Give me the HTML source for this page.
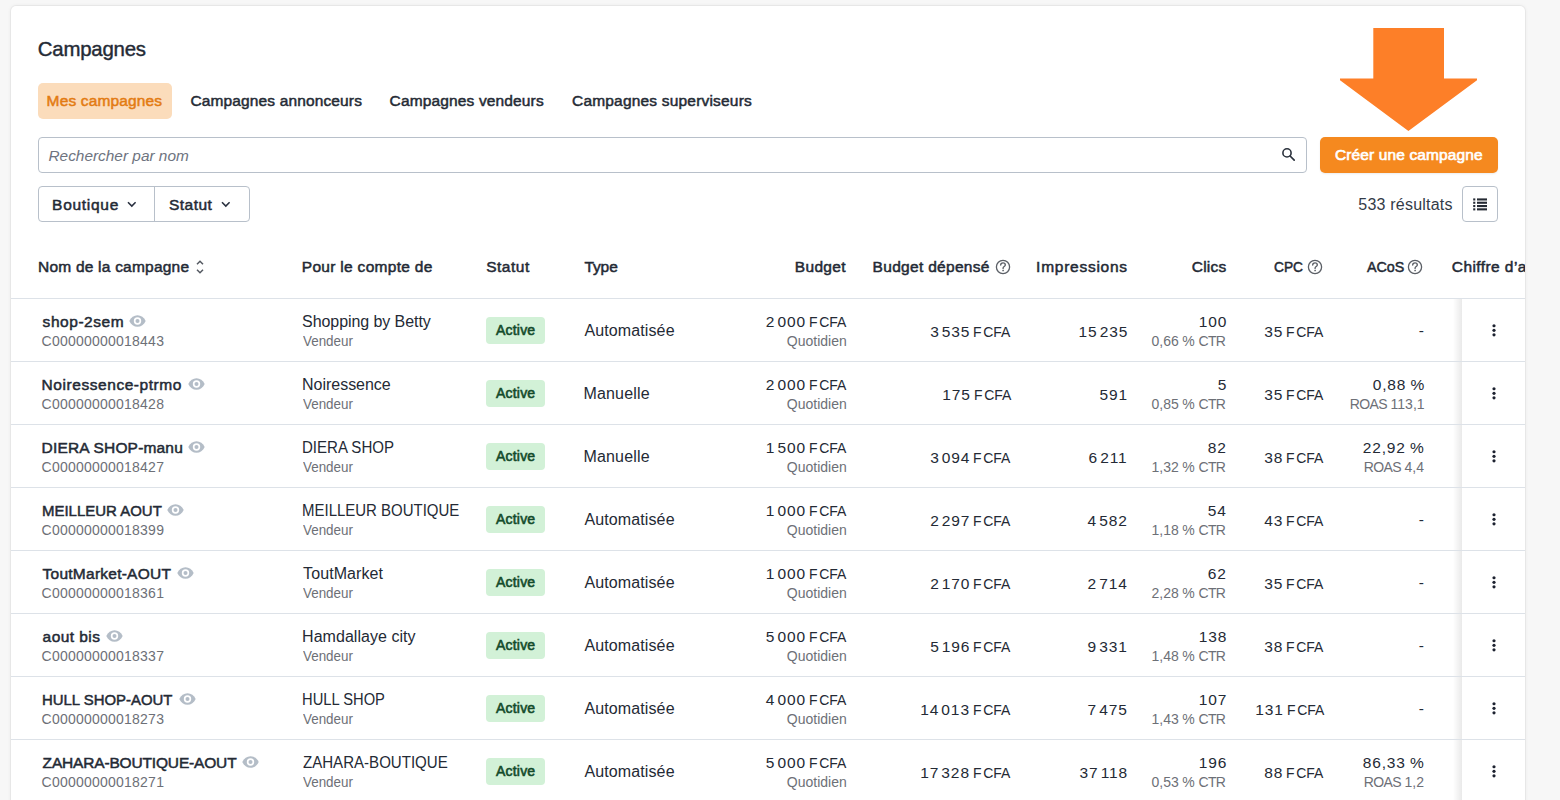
<!DOCTYPE html>
<html><head><meta charset="utf-8"><style>
*{box-sizing:border-box;margin:0;padding:0}
html,body{width:1560px;height:800px;overflow:hidden;background:#f7f7f7;font-family:"Liberation Sans",sans-serif;color:#242a35}
.card{position:absolute;left:11px;top:6px;width:1514px;height:830px;background:#fff;border-radius:5px;box-shadow:0 0 0 1px rgba(0,0,0,0.035),0 0 4px rgba(0,0,0,0.07);overflow:hidden}
.a{position:absolute;white-space:nowrap;line-height:20px}
.sb{-webkit-text-stroke-width:0.5px}
.title{font-size:20.4px;-webkit-text-stroke-width:0.4px}
.tab{font-size:15.5px;color:#252b35}
.tabbg{left:27px;top:77px;width:134px;height:36px;border-radius:5px;background:#fbdcbb}
.on{color:#e37b12}
.search{left:27px;top:131px;width:1269px;height:36px;border:1px solid #b8c0ca;border-radius:4px}
.ph{font-size:15.4px;font-style:italic;color:#6e7480}
.btn{left:1309px;top:131px;width:178px;height:36px;border-radius:5px;background:#f5891f;box-shadow:0 1px 2px rgba(0,0,0,0.08)}
.wt{color:#fff;font-size:15.5px;-webkit-text-stroke-width:0.65px!important}
.filt{left:27px;top:180px;width:212px;height:36px;border:1px solid #b8c0ca;border-radius:4px}
.fdiv{left:115px;top:0;width:1px;height:34px;background:#b8c0ca}
.ftxt{font-size:15.5px}
.res{font-size:16px;color:#333b48}
.lbtn{left:1451px;top:180px;width:36px;height:36px;border:1px solid #b8c0ca;border-radius:4px}
.th{font-size:15.5px}
.chf{letter-spacing:0.42px}
.hline{left:0;width:1514px;height:1px;background:#dde2e8}
.nm{font-size:15.5px}
.sub{font-size:14px;color:#6d7077}
.reg{font-size:16px}
.n16{font-size:15.5px;letter-spacing:0.88px;word-spacing:-3px}
.n14{font-size:14px;color:#6d7077}
.id{}
.sp{letter-spacing:-1.43px;word-spacing:0}
.fcfa{display:inline-block;letter-spacing:0;word-spacing:0;transform:scaleX(0.9);transform-origin:0 50%;margin-right:-4.25px}
.ws14{word-spacing:-2.35px}
.ws0{word-spacing:-1.2px}
.caps{letter-spacing:-0.6px}
.ws1{word-spacing:-0.3px}
.badge{width:59px;height:27px;border-radius:4px;background:#d2f1d7}
.bt{font-size:14px;color:#134b2b;-webkit-text-stroke-width:0.6px!important}
.sticky{left:1451px;width:63px;height:62px;background:#fff}
.shadow{left:1442px;width:9px;height:62px;background:linear-gradient(to right,rgba(0,0,0,0),rgba(0,0,0,0.085))}
.arrow{left:1329px;top:22px}
</style></head><body>
<div class="card">
<div class="a tabbg"></div>
<div class="a search"><svg class="a" style="left:1242px;top:9px" width="16" height="16" viewBox="0 0 16 16"><circle cx="6" cy="5.9" r="4.1" fill="none" stroke="#2a313c" stroke-width="1.6"/><path d="M9.1 9l4.1 4.1" stroke="#2a313c" stroke-width="1.7" stroke-linecap="round"/></svg></div>
<div class="a btn"></div>
<div class="a filt"><div class="a fdiv"></div><svg class="a" style="left:88px;top:14px" width="10" height="7" viewBox="0 0 10 7"><path d="M1 1.2l3.8 3.8 3.8-3.8" fill="none" stroke="#2a3140" stroke-width="1.6"/></svg><svg class="a" style="left:182px;top:14px" width="10" height="7" viewBox="0 0 10 7"><path d="M1 1.2l3.8 3.8 3.8-3.8" fill="none" stroke="#2a3140" stroke-width="1.6"/></svg></div>
<div class="a lbtn"><svg class="a" style="left:10.3px;top:11px" width="14" height="13" viewBox="0 0 14 13"><rect x="0.2" y="0.4" width="2.1" height="2.1" fill="#252a33"/><rect x="4" y="0.4" width="10" height="2.1" fill="#252a33"/><rect x="0.2" y="3.7" width="2.1" height="2.1" fill="#252a33"/><rect x="4" y="3.7" width="10" height="2.1" fill="#252a33"/><rect x="0.2" y="7.0" width="2.1" height="2.1" fill="#252a33"/><rect x="4" y="7.0" width="10" height="2.1" fill="#252a33"/><rect x="0.2" y="10.3" width="2.1" height="2.1" fill="#252a33"/><rect x="4" y="10.3" width="10" height="2.1" fill="#252a33"/></svg></div>
<svg class="a arrow" width="140" height="105" viewBox="0 0 140 105"><path d="M33.3 0H104V50.5H137V52.3L68.4 103L0 52.3V50.5H33.3Z" fill="#fd7f28"/></svg>
<svg class="a" style="left:185px;top:254px" width="8" height="14" viewBox="0 0 8 14"><path d="M1 4.3l3-3 3 3M1 9.7l3 3 3-3" fill="none" stroke="#555a62" stroke-width="1.5"/></svg>
<svg class="a" style="left:983.5px;top:253px" width="16" height="16" viewBox="0 0 16 16"><circle cx="8" cy="8" r="6.6" fill="none" stroke="#5b5f66" stroke-width="1.3"/><path d="M5.7 6.1C5.7 4.7 6.7 3.9 8 3.9C9.4 3.9 10.3 4.8 10.3 5.9C10.3 7.4 8.1 7.6 8.1 9.1V9.5" fill="none" stroke="#5b5f66" stroke-width="1.35" stroke-linecap="round"/><circle cx="8.1" cy="11.5" r=".85" fill="#5b5f66"/></svg>
<svg class="a" style="left:1296px;top:253px" width="16" height="16" viewBox="0 0 16 16"><circle cx="8" cy="8" r="6.6" fill="none" stroke="#5b5f66" stroke-width="1.3"/><path d="M5.7 6.1C5.7 4.7 6.7 3.9 8 3.9C9.4 3.9 10.3 4.8 10.3 5.9C10.3 7.4 8.1 7.6 8.1 9.1V9.5" fill="none" stroke="#5b5f66" stroke-width="1.35" stroke-linecap="round"/><circle cx="8.1" cy="11.5" r=".85" fill="#5b5f66"/></svg>
<svg class="a" style="left:1396px;top:253px" width="16" height="16" viewBox="0 0 16 16"><circle cx="8" cy="8" r="6.6" fill="none" stroke="#5b5f66" stroke-width="1.3"/><path d="M5.7 6.1C5.7 4.7 6.7 3.9 8 3.9C9.4 3.9 10.3 4.8 10.3 5.9C10.3 7.4 8.1 7.6 8.1 9.1V9.5" fill="none" stroke="#5b5f66" stroke-width="1.35" stroke-linecap="round"/><circle cx="8.1" cy="11.5" r=".85" fill="#5b5f66"/></svg>
<div class="a hline" style="top:292px"></div>
<div class="a shadow" style="top:293px"></div><div class="a sticky" style="top:293px"></div>
<svg class="a" style="left:118.0px;top:308.5px" width="17" height="12" viewBox="0 0 17 12"><path d="M0.3 6C2 2.3 5 0.2 8.5 0.2S15 2.3 16.7 6C15 9.7 12 11.8 8.5 11.8S2 9.7 0.3 6Z" fill="#b4bdc7"/><circle cx="8.5" cy="6" r="3.7" fill="#fff"/><circle cx="8.5" cy="6" r="2" fill="#b4bdc7"/></svg>
<div class="a badge" style="left:475px;top:311px"></div>
<svg class="a" style="left:1481px;top:317.7px" width="4" height="13" viewBox="0 0 4 13"><circle cx="2" cy="1.75" r="1.6" fill="#1d2230"/><circle cx="2" cy="6.3" r="1.6" fill="#1d2230"/><circle cx="2" cy="10.85" r="1.6" fill="#1d2230"/></svg>
<div class="a hline" style="top:355px"></div>
<div class="a shadow" style="top:356px"></div><div class="a sticky" style="top:356px"></div>
<svg class="a" style="left:176.5px;top:371.5px" width="17" height="12" viewBox="0 0 17 12"><path d="M0.3 6C2 2.3 5 0.2 8.5 0.2S15 2.3 16.7 6C15 9.7 12 11.8 8.5 11.8S2 9.7 0.3 6Z" fill="#b4bdc7"/><circle cx="8.5" cy="6" r="3.7" fill="#fff"/><circle cx="8.5" cy="6" r="2" fill="#b4bdc7"/></svg>
<div class="a badge" style="left:475px;top:374px"></div>
<svg class="a" style="left:1481px;top:380.7px" width="4" height="13" viewBox="0 0 4 13"><circle cx="2" cy="1.75" r="1.6" fill="#1d2230"/><circle cx="2" cy="6.3" r="1.6" fill="#1d2230"/><circle cx="2" cy="10.85" r="1.6" fill="#1d2230"/></svg>
<div class="a hline" style="top:418px"></div>
<div class="a shadow" style="top:419px"></div><div class="a sticky" style="top:419px"></div>
<svg class="a" style="left:177.1px;top:434.5px" width="17" height="12" viewBox="0 0 17 12"><path d="M0.3 6C2 2.3 5 0.2 8.5 0.2S15 2.3 16.7 6C15 9.7 12 11.8 8.5 11.8S2 9.7 0.3 6Z" fill="#b4bdc7"/><circle cx="8.5" cy="6" r="3.7" fill="#fff"/><circle cx="8.5" cy="6" r="2" fill="#b4bdc7"/></svg>
<div class="a badge" style="left:475px;top:437px"></div>
<svg class="a" style="left:1481px;top:443.7px" width="4" height="13" viewBox="0 0 4 13"><circle cx="2" cy="1.75" r="1.6" fill="#1d2230"/><circle cx="2" cy="6.3" r="1.6" fill="#1d2230"/><circle cx="2" cy="10.85" r="1.6" fill="#1d2230"/></svg>
<div class="a hline" style="top:481px"></div>
<div class="a shadow" style="top:482px"></div><div class="a sticky" style="top:482px"></div>
<svg class="a" style="left:156.4px;top:497.5px" width="17" height="12" viewBox="0 0 17 12"><path d="M0.3 6C2 2.3 5 0.2 8.5 0.2S15 2.3 16.7 6C15 9.7 12 11.8 8.5 11.8S2 9.7 0.3 6Z" fill="#b4bdc7"/><circle cx="8.5" cy="6" r="3.7" fill="#fff"/><circle cx="8.5" cy="6" r="2" fill="#b4bdc7"/></svg>
<div class="a badge" style="left:475px;top:500px"></div>
<svg class="a" style="left:1481px;top:506.70000000000005px" width="4" height="13" viewBox="0 0 4 13"><circle cx="2" cy="1.75" r="1.6" fill="#1d2230"/><circle cx="2" cy="6.3" r="1.6" fill="#1d2230"/><circle cx="2" cy="10.85" r="1.6" fill="#1d2230"/></svg>
<div class="a hline" style="top:544px"></div>
<div class="a shadow" style="top:545px"></div><div class="a sticky" style="top:545px"></div>
<svg class="a" style="left:166.0px;top:560.5px" width="17" height="12" viewBox="0 0 17 12"><path d="M0.3 6C2 2.3 5 0.2 8.5 0.2S15 2.3 16.7 6C15 9.7 12 11.8 8.5 11.8S2 9.7 0.3 6Z" fill="#b4bdc7"/><circle cx="8.5" cy="6" r="3.7" fill="#fff"/><circle cx="8.5" cy="6" r="2" fill="#b4bdc7"/></svg>
<div class="a badge" style="left:475px;top:563px"></div>
<svg class="a" style="left:1481px;top:569.7px" width="4" height="13" viewBox="0 0 4 13"><circle cx="2" cy="1.75" r="1.6" fill="#1d2230"/><circle cx="2" cy="6.3" r="1.6" fill="#1d2230"/><circle cx="2" cy="10.85" r="1.6" fill="#1d2230"/></svg>
<div class="a hline" style="top:607px"></div>
<div class="a shadow" style="top:608px"></div><div class="a sticky" style="top:608px"></div>
<svg class="a" style="left:94.6px;top:623.5px" width="17" height="12" viewBox="0 0 17 12"><path d="M0.3 6C2 2.3 5 0.2 8.5 0.2S15 2.3 16.7 6C15 9.7 12 11.8 8.5 11.8S2 9.7 0.3 6Z" fill="#b4bdc7"/><circle cx="8.5" cy="6" r="3.7" fill="#fff"/><circle cx="8.5" cy="6" r="2" fill="#b4bdc7"/></svg>
<div class="a badge" style="left:475px;top:626px"></div>
<svg class="a" style="left:1481px;top:632.7px" width="4" height="13" viewBox="0 0 4 13"><circle cx="2" cy="1.75" r="1.6" fill="#1d2230"/><circle cx="2" cy="6.3" r="1.6" fill="#1d2230"/><circle cx="2" cy="10.85" r="1.6" fill="#1d2230"/></svg>
<div class="a hline" style="top:670px"></div>
<div class="a shadow" style="top:671px"></div><div class="a sticky" style="top:671px"></div>
<svg class="a" style="left:167.5px;top:686.5px" width="17" height="12" viewBox="0 0 17 12"><path d="M0.3 6C2 2.3 5 0.2 8.5 0.2S15 2.3 16.7 6C15 9.7 12 11.8 8.5 11.8S2 9.7 0.3 6Z" fill="#b4bdc7"/><circle cx="8.5" cy="6" r="3.7" fill="#fff"/><circle cx="8.5" cy="6" r="2" fill="#b4bdc7"/></svg>
<div class="a badge" style="left:475px;top:689px"></div>
<svg class="a" style="left:1481px;top:695.7px" width="4" height="13" viewBox="0 0 4 13"><circle cx="2" cy="1.75" r="1.6" fill="#1d2230"/><circle cx="2" cy="6.3" r="1.6" fill="#1d2230"/><circle cx="2" cy="10.85" r="1.6" fill="#1d2230"/></svg>
<div class="a hline" style="top:733px"></div>
<div class="a shadow" style="top:734px"></div><div class="a sticky" style="top:734px"></div>
<svg class="a" style="left:231.4px;top:749.5px" width="17" height="12" viewBox="0 0 17 12"><path d="M0.3 6C2 2.3 5 0.2 8.5 0.2S15 2.3 16.7 6C15 9.7 12 11.8 8.5 11.8S2 9.7 0.3 6Z" fill="#b4bdc7"/><circle cx="8.5" cy="6" r="3.7" fill="#fff"/><circle cx="8.5" cy="6" r="2" fill="#b4bdc7"/></svg>
<div class="a badge" style="left:475px;top:752px"></div>
<svg class="a" style="left:1481px;top:758.7px" width="4" height="13" viewBox="0 0 4 13"><circle cx="2" cy="1.75" r="1.6" fill="#1d2230"/><circle cx="2" cy="6.3" r="1.6" fill="#1d2230"/><circle cx="2" cy="10.85" r="1.6" fill="#1d2230"/></svg>
<div class="a hline" style="top:796px"></div>
<div class='a title' style='left:26.80px;top:33px;letter-spacing:-0.225px;'>Campagnes</div>
<div class='a tab sb on' style='left:35.60px;top:85px;letter-spacing:0.142px;'>Mes campagnes</div>
<div class='a tab sb' style='left:179.40px;top:85px;letter-spacing:0.137px;'>Campagnes annonceurs</div>
<div class='a tab sb' style='left:378.60px;top:85px;letter-spacing:0.141px;'>Campagnes vendeurs</div>
<div class='a tab sb' style='left:561.00px;top:85px;letter-spacing:0.190px;'>Campagnes superviseurs</div>
<div class='a ph' style='left:37.50px;top:140px;'>Rechercher par nom</div>
<div class='a wt sb' style='left:1324.00px;top:139px;letter-spacing:0.118px;'>Créer une campagne</div>
<div class='a ftxt sb' style='left:41.10px;top:189px;letter-spacing:0.714px;'>Boutique</div>
<div class='a ftxt sb' style='left:158.00px;top:189px;letter-spacing:0.480px;'>Statut</div>
<div class='a res' style='left:1347.30px;top:189px;letter-spacing:0.217px;'>533 résultats</div>
<div class='a th sb' style='left:27.00px;top:251px;letter-spacing:0.218px;'>Nom de la campagne</div>
<div class='a th sb' style='left:290.80px;top:251px;letter-spacing:0.300px;'>Pour le compte de</div>
<div class='a th sb' style='left:475.20px;top:251px;letter-spacing:0.500px;'>Statut</div>
<div class='a th sb' style='left:573.40px;top:251px;letter-spacing:-0.067px;'>Type</div>
<div class='a th sb' style='left:783.80px;top:251px;letter-spacing:0.320px;'>Budget</div>
<div class='a th sb' style='left:861.60px;top:251px;letter-spacing:0.300px;'>Budget dépensé</div>
<div class='a th sb' style='left:1025.10px;top:251px;letter-spacing:0.740px;'>Impressions</div>
<div class='a th sb' style='left:1180.80px;top:251px;letter-spacing:0.200px;'>Clics</div>
<div class='a th sb' style='left:1262.80px;top:251px;transform:scaleX(0.8848);transform-origin:0 0;'>CPC</div>
<div class='a th sb' style='left:1355.50px;top:251px;transform:scaleX(0.9225);transform-origin:0 0;'>ACoS</div>
<div class='a th sb chf' style='left:1440.80px;top:251px;'>Chiffre d’affaires</div>
<div class='a nm sb' style='left:31.60px;top:306px;letter-spacing:0.550px;'>shop-2sem</div>
<div class='a n14 id' style='left:30.60px;top:325px;letter-spacing:0.229px;'>C00000000018443</div>
<div class='a reg' style='left:291.10px;top:306px;letter-spacing:-0.075px;'>Shopping by Betty</div>
<div class='a sub' style='left:292.10px;top:325px;transform:scaleX(0.9577);transform-origin:0 0;'>Vendeur</div>
<div class='a bt sb' style='left:485.00px;top:314px;letter-spacing:0.200px;'>Active</div>
<div class='a reg' style='left:573.40px;top:315px;letter-spacing:0.120px;'>Automatisée</div>
<div class='a n16' style='left:754.80px;top:306px;'>2 000<span class="sp"> </span><span class="fcfa">F<span class="ws14"> </span>CFA</span></div>
<div class='a sub' style='left:775.80px;top:325px;letter-spacing:0.013px;'>Quotidien</div>
<div class='a n16' style='left:919.20px;top:316px;'>3 535<span class="sp"> </span><span class="fcfa">F<span class="ws14"> </span>CFA</span></div>
<div class='a n16' style='left:1067.50px;top:316px;'>15 235</div>
<div class='a n16' style='left:1187.80px;top:306px;'>100</div>
<div class='a n14 ws1' style='left:1140.50px;top:325px;'>0,66 % <span class="caps">CTR</span></div>
<div class='a n16' style='left:1253.30px;top:316px;'>35<span class="sp"> </span><span class="fcfa">F<span class="ws14"> </span>CFA</span></div>
<div class='a n16' style='left:1407.70px;top:315px;'>-</div>
<div class='a nm sb' style='left:30.60px;top:369px;letter-spacing:0.556px;'>Noiressence-ptrmo</div>
<div class='a n14 id' style='left:30.60px;top:388px;letter-spacing:0.229px;'>C00000000018428</div>
<div class='a reg' style='left:291.10px;top:369px;letter-spacing:-0.030px;'>Noiressence</div>
<div class='a sub' style='left:292.10px;top:388px;transform:scaleX(0.9577);transform-origin:0 0;'>Vendeur</div>
<div class='a bt sb' style='left:485.00px;top:377px;letter-spacing:0.200px;'>Active</div>
<div class='a reg' style='left:572.40px;top:378px;letter-spacing:0.186px;'>Manuelle</div>
<div class='a n16' style='left:754.80px;top:369px;'>2 000<span class="sp"> </span><span class="fcfa">F<span class="ws14"> </span>CFA</span></div>
<div class='a sub' style='left:775.80px;top:388px;letter-spacing:0.013px;'>Quotidien</div>
<div class='a n16' style='left:931.20px;top:379px;'>175<span class="sp"> </span><span class="fcfa">F<span class="ws14"> </span>CFA</span></div>
<div class='a n16' style='left:1088.50px;top:379px;'>591</div>
<div class='a n16' style='left:1206.80px;top:369px;'>5</div>
<div class='a n14 ws1' style='left:1140.50px;top:388px;'>0,85 % <span class="caps">CTR</span></div>
<div class='a n16' style='left:1253.30px;top:379px;'>35<span class="sp"> </span><span class="fcfa">F<span class="ws14"> </span>CFA</span></div>
<div class='a n16' style='left:1361.70px;top:369px;'>0,88<span class="ws0"> </span>%</div>
<div class='a n14 ws1' style='left:1338.70px;top:388px;'><span class="caps">ROAS</span> 113,1</div>
<div class='a nm sb' style='left:30.60px;top:432px;letter-spacing:0.179px;'>DIERA SHOP-manu</div>
<div class='a n14 id' style='left:30.60px;top:451px;letter-spacing:0.229px;'>C00000000018427</div>
<div class='a reg' style='left:291.16px;top:432px;transform:scaleX(0.9406);transform-origin:0 0;'>DIERA SHOP</div>
<div class='a sub' style='left:292.10px;top:451px;transform:scaleX(0.9577);transform-origin:0 0;'>Vendeur</div>
<div class='a bt sb' style='left:485.00px;top:440px;letter-spacing:0.200px;'>Active</div>
<div class='a reg' style='left:572.40px;top:441px;letter-spacing:0.186px;'>Manuelle</div>
<div class='a n16' style='left:754.80px;top:432px;'>1 500<span class="sp"> </span><span class="fcfa">F<span class="ws14"> </span>CFA</span></div>
<div class='a sub' style='left:775.80px;top:451px;letter-spacing:0.013px;'>Quotidien</div>
<div class='a n16' style='left:919.20px;top:442px;'>3 094<span class="sp"> </span><span class="fcfa">F<span class="ws14"> </span>CFA</span></div>
<div class='a n16' style='left:1077.50px;top:442px;'>6 211</div>
<div class='a n16' style='left:1196.80px;top:432px;'>82</div>
<div class='a n14 ws1' style='left:1140.50px;top:451px;'>1,32 % <span class="caps">CTR</span></div>
<div class='a n16' style='left:1253.30px;top:442px;'>38<span class="sp"> </span><span class="fcfa">F<span class="ws14"> </span>CFA</span></div>
<div class='a n16' style='left:1351.70px;top:432px;'>22,92<span class="ws0"> </span>%</div>
<div class='a n14 ws1' style='left:1352.70px;top:451px;'><span class="caps">ROAS</span> 4,4</div>
<div class='a nm sb' style='left:30.63px;top:495px;transform:scaleX(0.9659);transform-origin:0 0;'>MEILLEUR AOUT</div>
<div class='a n14 id' style='left:30.60px;top:514px;letter-spacing:0.229px;'>C00000000018399</div>
<div class='a reg' style='left:291.16px;top:495px;transform:scaleX(0.9361);transform-origin:0 0;'>MEILLEUR BOUTIQUE</div>
<div class='a sub' style='left:292.10px;top:514px;transform:scaleX(0.9577);transform-origin:0 0;'>Vendeur</div>
<div class='a bt sb' style='left:485.00px;top:503px;letter-spacing:0.200px;'>Active</div>
<div class='a reg' style='left:573.40px;top:504px;letter-spacing:0.120px;'>Automatisée</div>
<div class='a n16' style='left:754.80px;top:495px;'>1 000<span class="sp"> </span><span class="fcfa">F<span class="ws14"> </span>CFA</span></div>
<div class='a sub' style='left:775.80px;top:514px;letter-spacing:0.013px;'>Quotidien</div>
<div class='a n16' style='left:919.20px;top:505px;'>2 297<span class="sp"> </span><span class="fcfa">F<span class="ws14"> </span>CFA</span></div>
<div class='a n16' style='left:1076.50px;top:505px;'>4 582</div>
<div class='a n16' style='left:1196.80px;top:495px;'>54</div>
<div class='a n14 ws1' style='left:1140.50px;top:514px;'>1,18 % <span class="caps">CTR</span></div>
<div class='a n16' style='left:1253.30px;top:505px;'>43<span class="sp"> </span><span class="fcfa">F<span class="ws14"> </span>CFA</span></div>
<div class='a n16' style='left:1407.70px;top:504px;'>-</div>
<div class='a nm sb' style='left:31.60px;top:558px;letter-spacing:0.243px;'>ToutMarket-AOUT</div>
<div class='a n14 id' style='left:30.60px;top:577px;letter-spacing:0.229px;'>C00000000018361</div>
<div class='a reg' style='left:292.10px;top:558px;letter-spacing:0.089px;'>ToutMarket</div>
<div class='a sub' style='left:292.10px;top:577px;transform:scaleX(0.9577);transform-origin:0 0;'>Vendeur</div>
<div class='a bt sb' style='left:485.00px;top:566px;letter-spacing:0.200px;'>Active</div>
<div class='a reg' style='left:573.40px;top:567px;letter-spacing:0.120px;'>Automatisée</div>
<div class='a n16' style='left:754.80px;top:558px;'>1 000<span class="sp"> </span><span class="fcfa">F<span class="ws14"> </span>CFA</span></div>
<div class='a sub' style='left:775.80px;top:577px;letter-spacing:0.013px;'>Quotidien</div>
<div class='a n16' style='left:919.20px;top:568px;'>2 170<span class="sp"> </span><span class="fcfa">F<span class="ws14"> </span>CFA</span></div>
<div class='a n16' style='left:1076.50px;top:568px;'>2 714</div>
<div class='a n16' style='left:1196.80px;top:558px;'>62</div>
<div class='a n14 ws1' style='left:1140.50px;top:577px;'>2,28 % <span class="caps">CTR</span></div>
<div class='a n16' style='left:1253.30px;top:568px;'>35<span class="sp"> </span><span class="fcfa">F<span class="ws14"> </span>CFA</span></div>
<div class='a n16' style='left:1407.70px;top:567px;'>-</div>
<div class='a nm sb' style='left:31.60px;top:621px;letter-spacing:0.429px;'>aout bis</div>
<div class='a n14 id' style='left:30.60px;top:640px;letter-spacing:0.229px;'>C00000000018337</div>
<div class='a reg' style='left:291.10px;top:621px;letter-spacing:0.036px;'>Hamdallaye city</div>
<div class='a sub' style='left:292.10px;top:640px;transform:scaleX(0.9577);transform-origin:0 0;'>Vendeur</div>
<div class='a bt sb' style='left:485.00px;top:629px;letter-spacing:0.200px;'>Active</div>
<div class='a reg' style='left:573.40px;top:630px;letter-spacing:0.120px;'>Automatisée</div>
<div class='a n16' style='left:754.80px;top:621px;'>5 000<span class="sp"> </span><span class="fcfa">F<span class="ws14"> </span>CFA</span></div>
<div class='a sub' style='left:775.80px;top:640px;letter-spacing:0.013px;'>Quotidien</div>
<div class='a n16' style='left:919.20px;top:631px;'>5 196<span class="sp"> </span><span class="fcfa">F<span class="ws14"> </span>CFA</span></div>
<div class='a n16' style='left:1076.50px;top:631px;'>9 331</div>
<div class='a n16' style='left:1187.80px;top:621px;'>138</div>
<div class='a n14 ws1' style='left:1140.50px;top:640px;'>1,48 % <span class="caps">CTR</span></div>
<div class='a n16' style='left:1253.30px;top:631px;'>38<span class="sp"> </span><span class="fcfa">F<span class="ws14"> </span>CFA</span></div>
<div class='a n16' style='left:1407.70px;top:630px;'>-</div>
<div class='a nm sb' style='left:30.64px;top:684px;transform:scaleX(0.9622);transform-origin:0 0;'>HULL SHOP-AOUT</div>
<div class='a n14 id' style='left:30.60px;top:703px;letter-spacing:0.229px;'>C00000000018273</div>
<div class='a reg' style='left:291.18px;top:684px;transform:scaleX(0.9202);transform-origin:0 0;'>HULL SHOP</div>
<div class='a sub' style='left:292.10px;top:703px;transform:scaleX(0.9577);transform-origin:0 0;'>Vendeur</div>
<div class='a bt sb' style='left:485.00px;top:692px;letter-spacing:0.200px;'>Active</div>
<div class='a reg' style='left:573.40px;top:693px;letter-spacing:0.120px;'>Automatisée</div>
<div class='a n16' style='left:754.80px;top:684px;'>4 000<span class="sp"> </span><span class="fcfa">F<span class="ws14"> </span>CFA</span></div>
<div class='a sub' style='left:775.80px;top:703px;letter-spacing:0.013px;'>Quotidien</div>
<div class='a n16' style='left:909.20px;top:694px;'>14 013<span class="sp"> </span><span class="fcfa">F<span class="ws14"> </span>CFA</span></div>
<div class='a n16' style='left:1076.50px;top:694px;'>7 475</div>
<div class='a n16' style='left:1187.80px;top:684px;'>107</div>
<div class='a n14 ws1' style='left:1140.50px;top:703px;'>1,43 % <span class="caps">CTR</span></div>
<div class='a n16' style='left:1244.30px;top:694px;'>131<span class="sp"> </span><span class="fcfa">F<span class="ws14"> </span>CFA</span></div>
<div class='a n16' style='left:1407.70px;top:693px;'>-</div>
<div class='a nm sb' style='left:31.60px;top:747px;letter-spacing:-0.168px;'>ZAHARA-BOUTIQUE-AOUT</div>
<div class='a n14 id' style='left:30.60px;top:766px;letter-spacing:0.229px;'>C00000000018271</div>
<div class='a reg' style='left:292.10px;top:747px;transform:scaleX(0.9412);transform-origin:0 0;'>ZAHARA-BOUTIQUE</div>
<div class='a sub' style='left:292.10px;top:766px;transform:scaleX(0.9577);transform-origin:0 0;'>Vendeur</div>
<div class='a bt sb' style='left:485.00px;top:755px;letter-spacing:0.200px;'>Active</div>
<div class='a reg' style='left:573.40px;top:756px;letter-spacing:0.120px;'>Automatisée</div>
<div class='a n16' style='left:754.80px;top:747px;'>5 000<span class="sp"> </span><span class="fcfa">F<span class="ws14"> </span>CFA</span></div>
<div class='a sub' style='left:775.80px;top:766px;letter-spacing:0.013px;'>Quotidien</div>
<div class='a n16' style='left:909.20px;top:757px;'>17 328<span class="sp"> </span><span class="fcfa">F<span class="ws14"> </span>CFA</span></div>
<div class='a n16' style='left:1068.50px;top:757px;'>37 118</div>
<div class='a n16' style='left:1187.80px;top:747px;'>196</div>
<div class='a n14 ws1' style='left:1140.50px;top:766px;'>0,53 % <span class="caps">CTR</span></div>
<div class='a n16' style='left:1253.30px;top:757px;'>88<span class="sp"> </span><span class="fcfa">F<span class="ws14"> </span>CFA</span></div>
<div class='a n16' style='left:1351.70px;top:747px;'>86,33<span class="ws0"> </span>%</div>
<div class='a n14 ws1' style='left:1352.70px;top:766px;'><span class="caps">ROAS</span> 1,2</div>
</div>
</body></html>
